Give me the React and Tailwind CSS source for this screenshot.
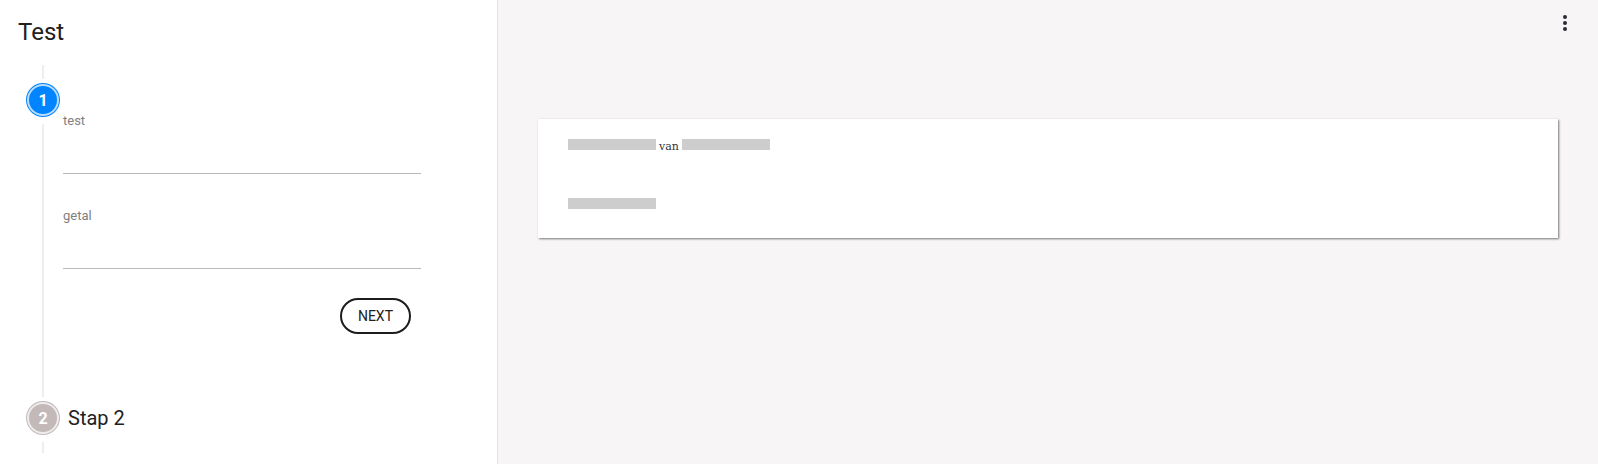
import React from "react";

function StepBadge({ number, active }) {
  return (
    <span
      className={`flex size-[34px] shrink-0 items-center justify-center rounded-full p-px ${
        active ? "bg-[#0084ff]" : "bg-[#c3b9b9]"
      }`}
    >
      <span
        className={`flex size-8 items-center justify-center rounded-full border-2 border-[#ffffffb8] pt-0.5 text-base leading-6 font-bold text-white ${
          active ? "bg-[#0084ff]" : "bg-[#c3b9b9]"
        }`}
      >
        {number}
      </span>
    </span>
  );
}

function Field({ id, label }) {
  return (
    <div className="flex flex-col">
      <label htmlFor={id} className="text-[13px] leading-4 text-[#808080]">
        {label}
      </label>
      <input
        id={id}
        type="text"
        className="h-[45px] w-full border-b border-[#b9b9b9] bg-transparent text-base text-[#212121] outline-none"
      />
    </div>
  );
}

function Placeholder() {
  return <span className="h-[11px] w-[88px] bg-[#cdcdcd]" />;
}

export default function App() {
  return (
    <div className="flex min-h-screen bg-[#f7f5f6] font-['Roboto',sans-serif] text-[#212121]">
      <aside className="w-[498px] shrink-0 border-r border-[#e4e3e3] bg-white">
        <h1 className="px-[18px] pt-4 text-2xl leading-8">Test</h1>

        <ol className="pt-[17px] pr-[76px] pl-[26px]">
          <li className="flex gap-[3px]">
            <div className="flex w-[34px] shrink-0 flex-col items-center">
              <span className="mb-1 h-3.5 w-0.5 bg-[#eeeeee]" />
              <StepBadge number="1" active />
              <span className="mt-[7px] w-0.5 flex-1 bg-[#eeeeee]" />
            </div>
            <form
              className="min-w-0 flex-1 pt-12 pb-[63px]"
              onSubmit={(e) => e.preventDefault()}
            >
              <div className="flex flex-col gap-[34px]">
                <Field id="test" label="test" />
                <Field id="getal" label="getal" />
              </div>
              <div className="flex justify-end pt-[29px] pr-[10px]">
                <button
                  type="submit"
                  className="h-9 rounded-full border-2 border-[#1f1c1c] px-4 text-sm uppercase"
                >
                  Next
                </button>
              </div>
            </form>
          </li>

          <li className="flex gap-2 pt-1">
            <div className="flex w-[34px] shrink-0 flex-col items-center">
              <StepBadge number="2" />
              <span className="mt-[7px] h-[11px] w-0.5 bg-[#eeeeee]" />
            </div>
            <h2 className="text-xl leading-[34px]">Stap 2</h2>
          </li>
        </ol>
      </aside>

      <main className="flex min-w-0 flex-1 flex-col px-10">
        <div className="flex justify-end pt-[11px]">
          <button
            type="button"
            aria-label="Menu"
            className="-mr-[19px] flex size-6 items-center justify-center text-[#2b2b33]"
          >
            <svg viewBox="0 0 24 24" className="size-6" fill="currentColor">
              <circle cx="12" cy="6" r="2" />
              <circle cx="12" cy="12" r="2" />
              <circle cx="12" cy="18" r="2" />
            </svg>
          </button>
        </div>
        <article className="mt-[84px] flex flex-col gap-[46px] bg-white px-[30px] pt-5 pb-[29px] font-['DejaVu_Serif',serif] text-[11px] leading-[11px] text-[#333333] shadow-[1px_1px_2px_#777777]">
          <p className="flex items-baseline gap-[3px]">
            <Placeholder />
            <span>van</span>
            <Placeholder />
          </p>
          <p className="flex">
            <Placeholder />
          </p>
        </article>
      </main>
    </div>
  );
}
